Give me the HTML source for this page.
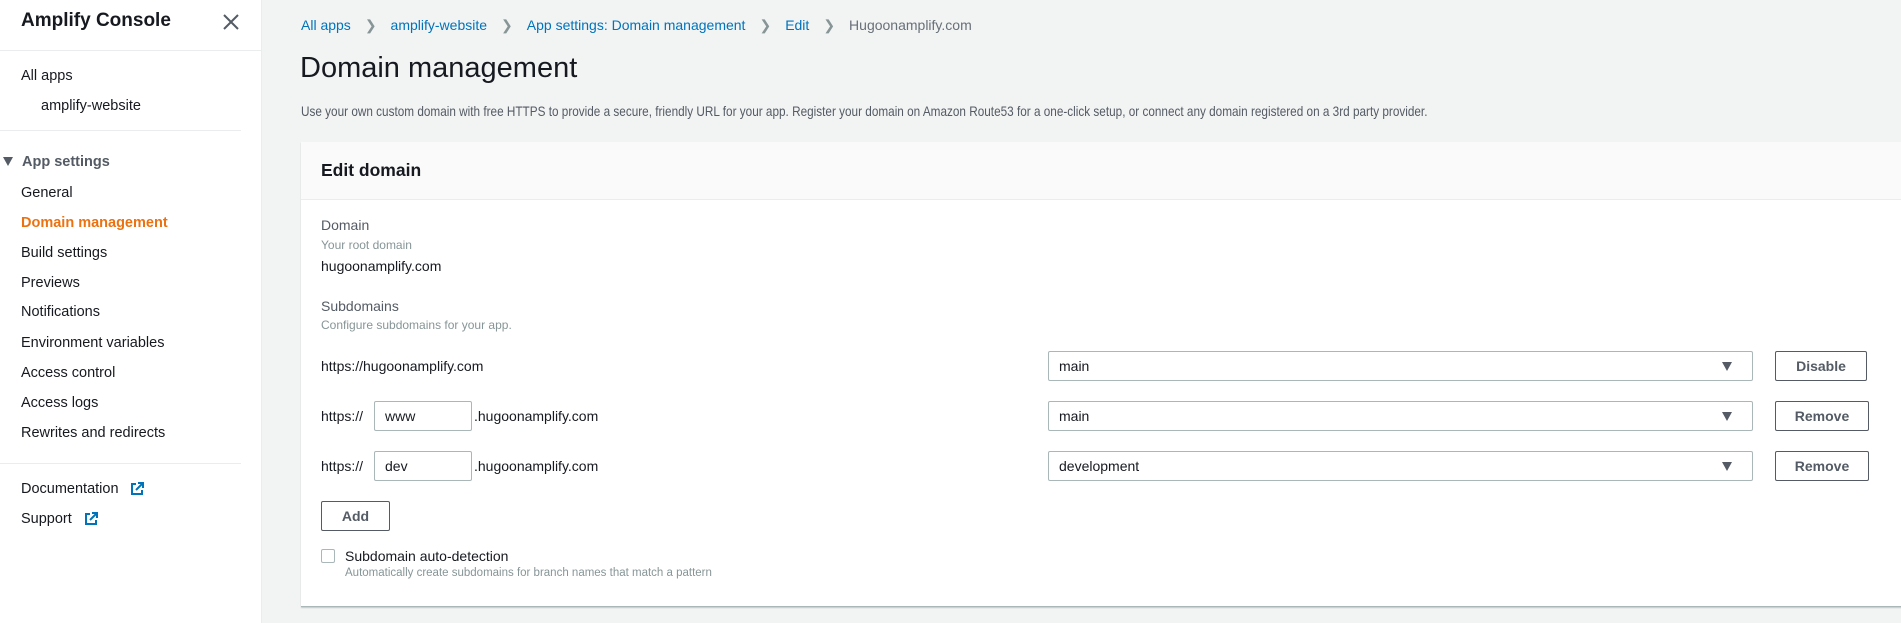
<!DOCTYPE html>
<html><head><meta charset="utf-8"><style>
*{box-sizing:border-box;margin:0;padding:0}
body{width:1901px;height:623px;overflow:hidden;background:#f2f3f3;font-family:"Liberation Sans",sans-serif;font-size:14px;color:#16191f;position:relative}
.a{position:absolute;white-space:nowrap}
#side{position:absolute;left:0;top:0;width:262px;height:623px;background:#fff;border-right:1px solid #eaeded}
.nav{font-size:14.5px;color:#16191f;line-height:18px}
.sel{position:absolute;left:1048px;width:705px;height:30px;border:1px solid #aab7b8;background:#fff;border-radius:2px;padding:6px 10px;font-size:14px}
.sel:after{content:"";position:absolute;right:20px;top:10px;border-left:5px solid transparent;border-right:5px solid transparent;border-top:9px solid #545b64}
.btn{position:absolute;height:30px;border:1px solid #545b64;border-radius:2px;background:#fff;font-weight:bold;color:#545b64;text-align:center;line-height:28px;font-size:14px}
.inp{position:absolute;left:374px;width:98px;height:30px;border:1px solid #aab7b8;border-radius:2px;background:#fff;padding:6px 10px}
</style></head><body>
<div id="side">
<div class="a" style="left:21px;top:10px;font-size:19px;font-weight:bold">Amplify Console</div>
<svg class="a" style="left:223px;top:14px" width="16" height="16"><path d="M1 1L15 15M15 1L1 15" stroke="#545b64" stroke-width="2"/></svg>
<div style="position:absolute;left:0;top:50px;width:261px;border-top:1px solid #eaeded"></div>
<div class="a nav" style="left:21px;top:67px">All apps</div>
<div class="a nav" style="left:41px;top:97px">amplify-website</div>
<div style="position:absolute;left:0;top:130px;width:241px;border-top:1px solid #eaeded"></div>
<div class="a" style="left:3px;top:157px;border-left:5px solid transparent;border-right:5px solid transparent;border-top:9px solid #545b64"></div>
<div class="a nav" style="left:22px;top:153px;font-weight:bold;color:#545b64">App settings</div>
<div class="a nav" style="left:21px;top:184px">General</div>
<div class="a nav" style="left:21px;top:214px;color:#ec7211;font-weight:bold">Domain management</div>
<div class="a nav" style="left:21px;top:244px">Build settings</div>
<div class="a nav" style="left:21px;top:274px">Previews</div>
<div class="a nav" style="left:21px;top:303px">Notifications</div>
<div class="a nav" style="left:21px;top:334px">Environment variables</div>
<div class="a nav" style="left:21px;top:364px">Access control</div>
<div class="a nav" style="left:21px;top:394px">Access logs</div>
<div class="a nav" style="left:21px;top:424px">Rewrites and redirects</div>
<div style="position:absolute;left:0;top:463px;width:241px;border-top:1px solid #eaeded"></div>
<div class="a nav" style="left:21px;top:480px">Documentation</div>
<svg class="a" style="left:130px;top:482px" width="14" height="14"><path d="M6 2H2v10h10V8M8 1h5v5M13 1L6 8" stroke="#0073bb" stroke-width="2" fill="none"/></svg>
<div class="a nav" style="left:21px;top:510px">Support</div>
<svg class="a" style="left:84px;top:512px" width="14" height="14"><path d="M6 2H2v10h10V8M8 1h5v5M13 1L6 8" stroke="#0073bb" stroke-width="2" fill="none"/></svg>
</div>
<div class="a" style="left:301px;top:17px;font-size:14px;color:#0073bb">All apps<span style="color:#879596;margin:0 14px">&#x276F;</span>amplify-website<span style="color:#879596;margin:0 14px">&#x276F;</span>App settings: Domain management<span style="color:#879596;margin:0 14px">&#x276F;</span>Edit<span style="color:#879596;margin:0 14px">&#x276F;</span><span style="color:#687078">Hugoonamplify.com</span></div>
<div class="a" style="left:300px;top:52px;font-size:29px">Domain management</div>
<div class="a" style="left:301px;top:103px;font-size:14px;color:#545b64;transform:scaleX(0.84);transform-origin:0 0">Use your own custom domain with free HTTPS to provide a secure, friendly URL for your app. Register your domain on Amazon Route53 for a one-click setup, or connect any domain registered on a 3rd party provider.</div>
<div style="position:absolute;left:301px;top:142px;width:1610px;height:465px;background:#fff;border-bottom:1px solid #aab7b8;box-shadow:0 1px 1px rgba(0,28,36,.2)">
<div style="height:58px;background:#fafafa;border-bottom:1px solid #eaeded"></div>
</div>
<div class="a" style="left:321px;top:160px;font-size:17.5px;font-weight:bold">Edit domain</div>
<div class="a" style="left:321px;top:217px;color:#545b64">Domain</div>
<div class="a" style="left:321px;top:238px;font-size:12px;color:#879596">Your root domain</div>
<div class="a" style="left:321px;top:258px">hugoonamplify.com</div>
<div class="a" style="left:321px;top:298px;color:#545b64">Subdomains</div>
<div class="a" style="left:321px;top:318px;font-size:12px;color:#879596">Configure subdomains for your app.</div>
<div class="a" style="left:321px;top:358px">https://hugoonamplify.com</div>
<div class="a" style="left:321px;top:408px">https://</div>
<div class="inp" style="top:401px">www</div>
<div class="a" style="left:474px;top:408px">.hugoonamplify.com</div>
<div class="a" style="left:321px;top:458px">https://</div>
<div class="inp" style="top:451px">dev</div>
<div class="a" style="left:474px;top:458px">.hugoonamplify.com</div>
<div class="sel" style="top:351px">main</div>
<div class="sel" style="top:401px">main</div>
<div class="sel" style="top:451px">development</div>
<div class="btn" style="left:1775px;top:351px;width:92px">Disable</div>
<div class="btn" style="left:1775px;top:401px;width:94px">Remove</div>
<div class="btn" style="left:1775px;top:451px;width:94px">Remove</div>
<div class="btn" style="left:321px;top:501px;width:69px">Add</div>
<div class="a" style="left:321px;top:549px;width:14px;height:14px;border:1px solid #aab7b8;border-radius:2px;background:#fff"></div>
<div class="a" style="left:345px;top:548px">Subdomain auto-detection</div>
<div class="a" style="left:345px;top:567px;font-size:11.5px;color:#879596">Automatically create subdomains for branch names that match a pattern</div>
</body></html>
